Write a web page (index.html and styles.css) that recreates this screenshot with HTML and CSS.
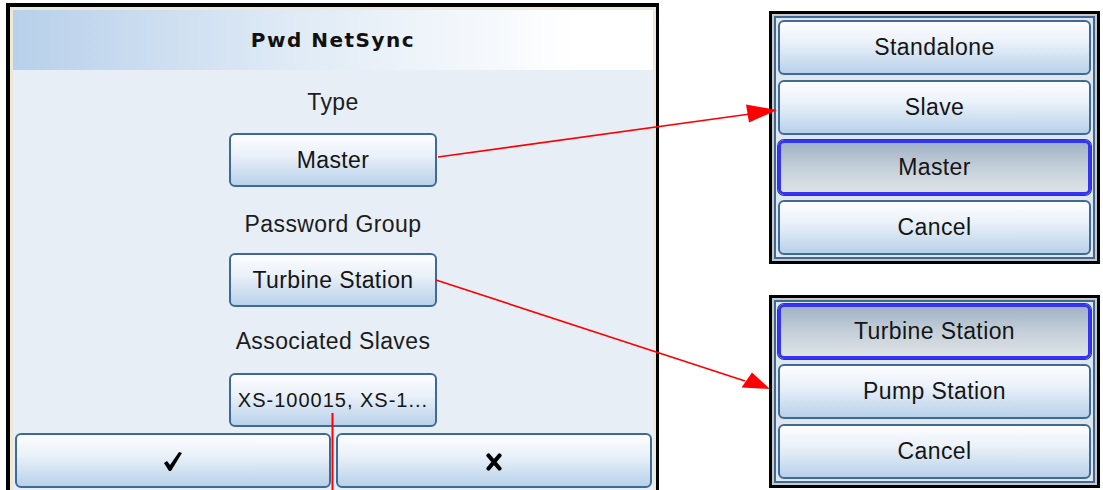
FILE: index.html
```html
<!DOCTYPE html>
<html lang="en">
<head>
  <meta charset="UTF-8">
  <meta name="viewport" content="width=device-width, initial-scale=1">
  <title>Pwd NetSync</title>
  <link rel="stylesheet" href="styles.css">
</head>
<body>
  <div class="canvas">
    <section class="panel">
      <div class="panel-inner">
        <header class="panel-head">Pwd NetSync</header>

        <div class="field-label lbl-type">Type</div>
        <button class="btn pick pick-type">Master</button>

        <div class="field-label lbl-group">Password Group</div>
        <button class="btn pick pick-group">Turbine Station</button>

        <div class="field-label lbl-slaves">Associated Slaves</div>
        <button class="btn pick pick-slaves small">XS-100015, XS-1...</button>

        <div class="actions">
          <button class="btn act" title="OK">
            <svg width="20" height="21" viewBox="0 0 20 21"><path d="M1 12 L4 10 L7 14 L16 1 L19 2 L8 20 L6 20 Z" fill="#000"/></svg>
          </button>
          <button class="btn act" title="Cancel">
            <svg width="16" height="18" viewBox="0 0 16 18"><path d="M2.5 2.5 L13.5 15.5 M13.5 2.5 L2.5 15.5" stroke="#000" stroke-width="4.2" stroke-linecap="round"/></svg>
          </button>
        </div>
      </div>
    </section>

    <aside class="menus">
      <div class="menu menu-type">
        <div class="menu-list">
          <button class="btn item">Standalone</button>
          <button class="btn item">Slave</button>
          <button class="btn item current">Master</button>
          <button class="btn item">Cancel</button>
        </div>
      </div>
      <div class="menu menu-group">
        <div class="menu-list">
          <button class="btn item current">Turbine Station</button>
          <button class="btn item">Pump Station</button>
          <button class="btn item">Cancel</button>
        </div>
      </div>
    </aside>

    <!-- callout arrows drawn over the screenshots -->
    <svg class="callouts" width="1103" height="490" viewBox="0 0 1103 490">
      <line x1="438" y1="157" x2="750" y2="114" stroke="#f00" stroke-width="1.6"/>
      <polygon points="777,110 746,104.5 749,122.5" fill="#f00"/>
      <line x1="436" y1="280" x2="745" y2="381" stroke="#f00" stroke-width="1.6"/>
      <polygon points="770,389 752,372.5 741.5,387.5" fill="#f00"/>
      <line x1="332.5" y1="413" x2="332.5" y2="490" stroke="#f00" stroke-width="2"/>
    </svg>
  </div>
</body>
</html>
```

FILE: styles.css
```css
body { margin: 0; background: #fff; font-family: "Liberation Sans", Arial, sans-serif; }
.canvas { position: relative; display: flex; align-items: flex-start; width: 1103px; height: 490px; overflow: hidden; }

/* main dialog */
.panel { margin: 3px 0 0 6px; width: 653px; height: 500px; box-sizing: border-box; border: solid #000; border-width: 4px 3px 0 4px; flex-shrink: 0; }
.panel-inner { height: 100%; box-sizing: border-box; border: 3px solid #ece9d8; border-bottom: 0; background: #e7eef6; display: flex; flex-direction: column; align-items: center; }
.panel-head { align-self: stretch; height: 60px; display: flex; align-items: center; justify-content: center; background: linear-gradient(to right, #b8d0ea, #e0ebf6 45%, #fff 88%); font: bold 20px "DejaVu Sans", Verdana, sans-serif; letter-spacing: 1.5px; color: #111; }

.field-label { font-size: 23px; letter-spacing: 0.4px; line-height: 28px; color: #1c1c1c; }
.lbl-type { margin-top: 18px; }
.lbl-group { margin-top: 23px; }
.lbl-slaves { margin-top: 20px; }

.btn { display: flex; align-items: center; justify-content: center; box-sizing: border-box; padding: 0; border: 2px solid #3d6a96; border-radius: 6px; background: linear-gradient(#fcfdff, #eaf1f9 40%, #b8d1ea); box-shadow: inset 0 1px 0 #fff; font-family: "Liberation Sans", Arial, sans-serif; font-size: 23px; letter-spacing: 0.4px; color: #151515; white-space: nowrap; overflow: hidden; }
.pick { width: 208px; height: 54px; }
.pick-type { margin-top: 17px; }
.pick-group { margin-top: 15px; }
.pick-slaves { margin-top: 18px; }
.small { font-size: 20px; letter-spacing: 1px; }

.actions { align-self: stretch; display: grid; grid-template-columns: 1fr 1fr; gap: 5px; padding: 0 1px 0 2px; margin-top: 6px; }
.act { height: 55px; padding-top: 2px; }

/* pop-up menus */
.menus { margin-left: 110px; width: 331px; display: flex; flex-direction: column; }
.menu { border: 3px solid #000; background: #c9c9c9; padding: 2px; }
.menu-type { margin-top: 11px; }
.menu-group { margin-top: 31px; }
.menu-list { border: 2px solid #3d6994; background: #dfe6ee; padding: 2px; display: flex; flex-direction: column; gap: 5px; }
.item { height: 55px; font-size: 23px; }
.item.current { border: 3px solid #3434f2; box-shadow: 0 0 0 1px #27466a; background: linear-gradient(#a0b2c5, #c4cfd9 50%, #dfe3e6); }

.callouts { position: absolute; left: 0; top: 0; pointer-events: none; }
```
